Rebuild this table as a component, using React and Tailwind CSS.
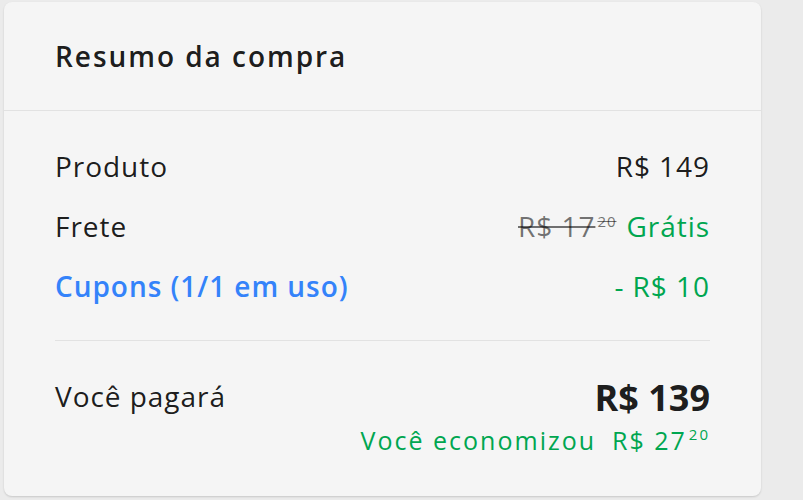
import React from 'react';

// Order summary card
const Row = ({ label, labelClass = 'text-[rgba(0,0,0,0.9)]', children }) => (
    <div className="flex h-[60px] items-center justify-between">
        <span className={labelClass}>{label}</span>
        <div className="flex items-baseline">{children}</div>
    </div>
);

const Cents = ({ value, strike = false }) => (
    <span className={`relative -top-[10px] ml-[2px] inline-block text-[15px] leading-none ${strike ? 'line-through' : ''}`}>
        {value}
    </span>
);

const App = () => {
    return (
        <div
            className="min-h-[500px] w-[803px] bg-[#ebebeb] pl-[4px] pt-[2px] tracking-[0.06em]"
            style={{ fontFamily: '"Open Sans", sans-serif' }}
        >
            <div className="w-[757px] rounded-[8px] bg-[#f5f5f5] shadow-[0_1px_2px_rgba(0,0,0,0.15)]">
                <div className="flex h-[109px] items-center border-b border-[#e2e2e2] px-[51px]">
                    <h2 className="text-[28px] font-semibold tracking-[0.07em] text-[rgba(0,0,0,0.9)]">Resumo da compra</h2>
                </div>

                <div className="px-[51px] pb-[40px] pt-[25px] text-[28px]">
                    <Row label="Produto">
                        <span className="text-[rgba(0,0,0,0.9)]">R$ 149</span>
                    </Row>
                    <Row label="Frete">
                        <span className="text-[rgba(0,0,0,0.55)]">
                            <span className="line-through">R$ 17</span>
                            <Cents value="20" strike />
                        </span>
                        <span className="ml-[10px] text-[#00a650]">Grátis</span>
                    </Row>
                    <Row label="Cupons (1/1 em uso)" labelClass="font-semibold text-[#3483fa]">
                        <span className="text-[#00a650]">- R$ 10</span>
                    </Row>

                    <div className="mt-[24px] border-t border-[#e2e2e2]" />

                    <div className="mt-[34px] flex items-start justify-between">
                        <span className="text-[rgba(0,0,0,0.9)]">Você pagará</span>
                        <span className="text-[36px] font-bold leading-[46px] tracking-normal text-[rgba(0,0,0,0.9)]">R$ 139</span>
                    </div>
                    <div className="mt-[3px] flex items-baseline justify-end text-[25px] leading-[32px] tracking-[0.08em] text-[#00a650]">
                        <span>Você economizou</span>
                        <span className="ml-[16px]">
                            R$ 27<Cents value="20" />
                        </span>
                    </div>
                </div>
            </div>
        </div>
    );
};

export default App;
